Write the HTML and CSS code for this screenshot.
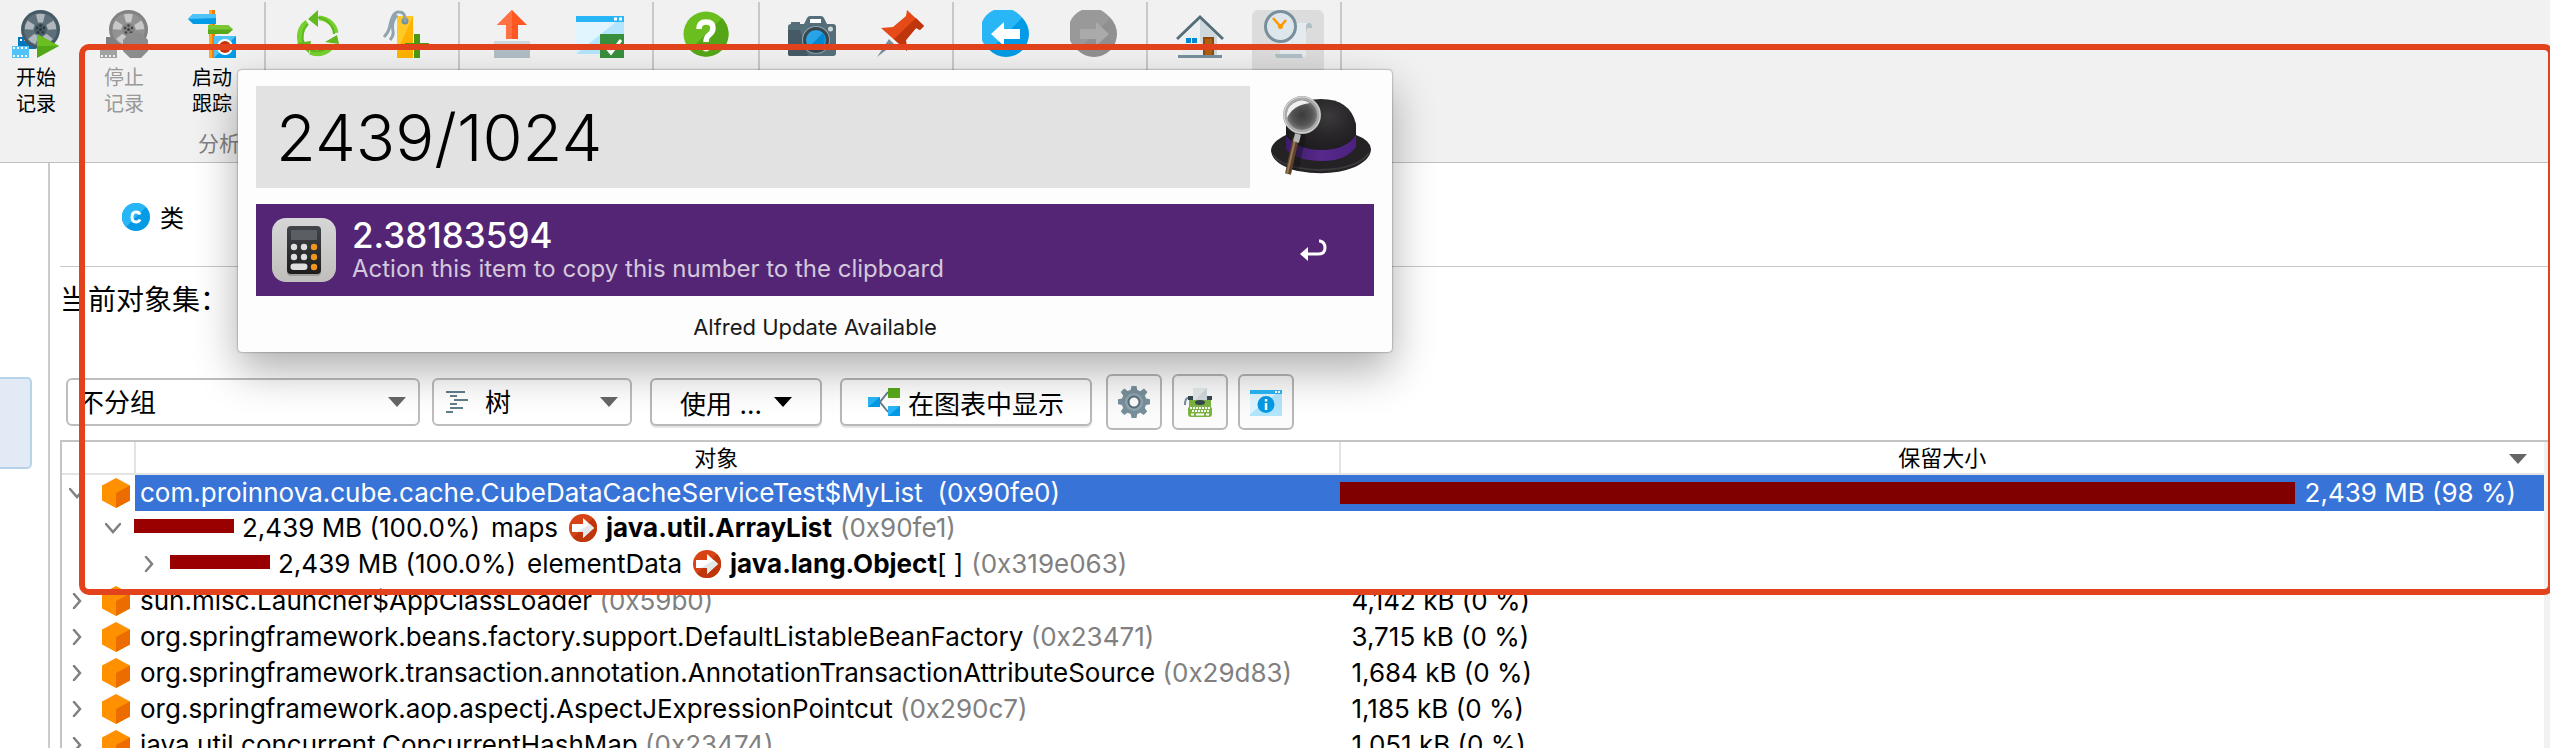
FILE: index.html
```html
<!DOCTYPE html>
<html lang="zh-CN">
<head>
<meta charset="utf-8">
<title>Heap Walker</title>
<link rel="stylesheet" href="styles.css">
</head>
<body>
<svg class="defs" aria-hidden="true">
  <defs>
    <symbol id="cube" viewBox="0 0 28 30"><path fill="#ff9000" d="M14 0 28 7.500V22.500L14 30 0 22.500V7.500z"/><path fill="#ec6c00" d="M14 15 28 7.500V22.500L14 30z"/></symbol>
    <symbol id="right" viewBox="0 0 16 16"><path d="M5 1 11 8 5 15" fill="none" stroke="#808080" stroke-width="2.500" stroke-linecap="round"/></symbol>
    <symbol id="down" viewBox="0 0 16 16"><path d="M1 4 8 12 15 4" fill="none" stroke="#808080" stroke-width="2.500" stroke-linecap="round"/></symbol>
    <symbol id="ref" viewBox="0 0 28 28"><circle cx="14" cy="14" r="14" fill="#d84315"/><path d="M24 4A14 14 0 0 1 4 24z" fill="#bf360c"/><path d="M3 10H14V4L25 14 14 24V18H3z" fill="#fff"/><path d="M14 24V18H8L21 10 25 14z" fill="#e4e8ea"/></symbol>
    <symbol id="caret" viewBox="0 0 18 10"><path d="M0 0H18L9 10z" fill="currentColor"/></symbol>
    <symbol id="reel" viewBox="0 0 48 48"><circle cx="28.500" cy="19.500" r="19.500" fill="currentColor"/><circle cx="28.500" cy="19.500" r="16.500" fill="#fff" opacity=".13"/><g fill="#fff" opacity=".5"><path id="hole" d="M24 4.500Q28.500 3 33 4.500L31 12.500H26z"/><use href="#hole" transform="rotate(72 28.500 19.500)"/><use href="#hole" transform="rotate(144 28.500 19.500)"/><use href="#hole" transform="rotate(216 28.500 19.500)"/><use href="#hole" transform="rotate(288 28.500 19.500)"/></g><circle cx="28.500" cy="19.500" r="6" fill="currentColor"/><g fill="#222" opacity=".65"><circle cx="28.500" cy="19.500" r="1.500"/><circle cx="25" cy="18" r="1.200"/><circle cx="32" cy="18" r="1.200"/><circle cx="26" cy="22.500" r="1.200"/><circle cx="31" cy="22.500" r="1.200"/><circle cx="28.500" cy="15.500" r="1.200"/></g></symbol>
  </defs>
</svg>

<header class="toolbar">
  <div class="group">
    <button class="tool"><svg class="ic" viewBox="0 0 48 48"><path d="M6 27h9q4 9 9 10v2H6z" fill="#0277bd"/><path d="M8 29h2v2H8zm4 0h2v2h-2z" fill="#fff"/><use href="#reel" color="#455a64" width="48" height="48"/><path d="M0 36h17v12H0z" fill="#4fc3f7"/><path d="M1 38h15M1 46h15" stroke="#fff" stroke-width="2" stroke-dasharray="2 2"/><path d="M25 24 47 36 25 48z" fill="#52a817"/><path d="M25 24 47 36H25z" fill="#6bbd20"/></svg><span>开始<br>记录</span></button>
    <button class="tool" disabled><svg class="ic" viewBox="0 0 48 48"><path d="M6 27h9q4 9 9 10v2H6z" fill="#808080"/><use href="#reel" color="#828282" width="48" height="48"/><path d="M0 36h17v12H0z" fill="#a2a2a2"/><path d="M1 38h15M1 46h15" stroke="#f0f0f0" stroke-width="2" stroke-dasharray="2 2"/><path d="M30 23h11l7 7v11l-7 7H30l-7-7V30z" fill="#8c8c8c"/></svg><span>停止<br>记录</span></button>
    <button class="tool"><svg class="ic" viewBox="0 0 48 48"><path d="M21 0h6v48h-6z" fill="#f57c00"/><path d="M21 0h3v48h-3z" fill="#ffa726"/><path d="M0 9 5 4H28V14H5z" fill="#039be5"/><path d="M0 9 5 4H28V8z" fill="#4fc3f7"/><path d="M20 15H40L45 19.500 40 24H20z" fill="#58a81a"/><path d="M20 15H40L45 19.500H20z" fill="#7cc832"/><path d="M26 26h22v22H26z" fill="#039be5"/><path d="M26 26h22L26 48z" fill="#4fc3f7"/><circle cx="37" cy="37" r="8" fill="#fff"/><circle cx="37" cy="37" r="6" fill="#bf360c"/></svg><span>启动<br>跟踪</span></button>
  </div>
  <div class="group">
    <button class="tool" aria-label="GC"><svg class="ic" viewBox="0 0 48 48"><g fill="none" stroke="#76d02e" stroke-width="5"><path d="M25 8A18 18 0 0 1 42 23"/><path d="M13 12A18 18 0 0 0 8 36"/><path d="M16 42A18 18 0 0 0 39 35"/></g><path d="M24 7.500A18 18 0 0 1 40 24M14 14A18 18 0 0 0 10 34M16 40A18 18 0 0 0 37 34" stroke="#5cb81c" stroke-width="2" fill="none"/><path d="M14 9 24 0V17zM45 34 31 32 43 25zM3 33 17 31 15 43z" fill="#62b91f"/></svg></button>
    <button class="tool" aria-label="Bookmark"><svg class="ic" viewBox="0 0 48 48"><path d="M15 6h16v42H15z" fill="#ffb300"/><path d="M15 6h16L15 42z" fill="#ffca28"/><circle cx="23" cy="11" r="3.500" fill="#78909c"/><path d="M23 12Q24 2 17 2 11 1 8 15 7 22 2 27M15 5Q9 12 11 21 12 25 8 30" fill="none" stroke="#90a4ae" stroke-width="3"/><path d="M32 24h6v9h9v6h-9v9h-6v-9h-9v-6h9z" fill="#4c9a12"/></svg></button>
  </div>
  <div class="group">
    <button class="tool" aria-label="Export"><svg class="ic" viewBox="0 0 48 48"><path d="M24 0 39 15H30V29H18V15H9z" fill="#ff5722"/><path d="M24 0V29H18V15H9z" fill="#ff7043"/><path d="M6 31h36v17H6z" fill="#b0bec5"/><path d="M6 31h36v4H6z" fill="#cfd8dc"/></svg></button>
    <button class="tool" aria-label="Settings"><svg class="ic" viewBox="0 0 48 48"><path d="M0 6h48v38H0z" fill="#b3e5fc"/><path d="M0 12h40L0 44z" fill="#e1f5fe"/><path d="M0 6h48v6H0z" fill="#29b6f6"/><path d="M38 7.500h3v3h-3zm5 0h3v3h-3z" fill="#fff"/><path d="M24 24h24v24H24z" fill="#388e3c"/><path d="m30 37 5 6L45 30" fill="none" stroke="#fff" stroke-width="3"/></svg></button>
  </div>
  <div class="group">
    <button class="tool" aria-label="Help"><svg class="ic" viewBox="0 0 48 48"><circle cx="24" cy="24" r="22.500" fill="#6abf1f"/><path d="M40 8A22.500 22.500 0 0 1 8 40z" fill="#54a618"/><path d="M17 19Q17 12 24 12 31 12 31 18 31 22 27 25 24 27 24 32" fill="none" stroke="#fff" stroke-width="5.500"/><circle cx="24" cy="38" r="3.500" fill="#fff"/></svg></button>
  </div>
  <div class="group">
    <button class="tool" aria-label="Snapshot"><svg class="ic" viewBox="0 0 48 48"><path d="M3 12h9v4H3zM19 8q1-2 3-2h11q2 0 3 2l3 6H16z" fill="#546e7a"/><path d="M22 9h11v4H22z" fill="#fff"/><rect y="14" width="48" height="32" rx="3" fill="#546e7a"/><path d="M0 20h12L20 46H2q-2 0-2-2z" fill="#455a64"/><circle cx="28" cy="30" r="14" fill="#90a4ae"/><circle cx="28" cy="30" r="13" fill="#37474f"/><circle cx="28" cy="30" r="10" fill="#29a3e8"/><path d="M35 23A10 10 0 0 1 21 37z" fill="#0288d1"/><circle cx="42.500" cy="19" r="2.500" fill="#cfd8dc"/></svg></button>
    <button class="tool" aria-label="Pin"><svg class="ic" viewBox="0 0 48 48"><path d="M1 47 13 29l5 5z" fill="#78909c"/><path d="M31 0 48 16 44 20 40 18 30 30 31 41 5 18 17 17 30 6z" fill="#e64a19"/><path d="M40 8 48 16 44 20 40 18 30 30 31 41 18 29z" fill="#bf360c"/></svg></button>
  </div>
  <div class="group">
    <button class="tool" aria-label="Back"><svg class="ic" viewBox="0 0 48 48"><circle cx="24" cy="24" r="23" fill="#039be5"/><path d="M40 8A23 23 0 1 0 8 40z" fill="#29b6f6"/><path d="M9 24 22 12V19H38V29H22V36z" fill="#fff"/></svg></button>
    <button class="tool" aria-label="Forward" disabled><svg class="ic" viewBox="0 0 48 48"><circle cx="24" cy="24" r="23" fill="#909090"/><path d="M40 8A23 23 0 1 0 8 40z" fill="#999"/><path d="M39 24 26 12V19H10V29H26V36z" fill="#aaa"/></svg></button>
  </div>
  <div class="group">
    <button class="tool" aria-label="Home"><svg class="ic" viewBox="0 0 48 48"><path d="M7 26 24 9 41 26V45H7z" fill="#eceff1"/><path d="M24 9 41 26V45H30L24 30z" fill="#cfd8dc"/><path d="M1 29 24 7 47 29" fill="none" stroke="#546e7a" stroke-width="3"/><path d="M2 45h44v3H2z" fill="#78909c"/><path d="M10 28h5v5h-5zm6 0h5v5h-5z" fill="#0288d1"/><path d="M27 27h11v18H27z" fill="#8d4a0b"/><path d="M29 29h7v16h-7z" fill="#ad6112"/></svg></button>
    <button class="tool active" aria-label="Time"><svg class="ic" viewBox="0 0 48 48"><path d="M18 13H46L42 18V44q0 4-4 4H16V20z" fill="#e4eaed"/><path d="M42 22V17q0-4 3-4t3 4v1h-5zM11 44h27q0 4 2 4H14q-3 0-3-4z" fill="#b0bec5"/><circle cx="16.500" cy="16.500" r="15" fill="#dde6ea" stroke="#78909c" stroke-width="3"/><path d="M9 8 16.500 16.500 22 10" fill="none" stroke="#ff9800" stroke-width="2.500"/><circle cx="16.500" cy="16.500" r="2.500" fill="#ff9800"/></svg></button>
  </div>
  <div class="group"></div>
  <div class="group-label">分析</div>
</header>

<div class="workspace">
  <aside class="side"><div class="side-item"></div></aside>
  <main class="main">
    <div class="tab"><svg class="class-ic" viewBox="0 0 28 28"><circle cx="14" cy="14" r="14" fill="#039be5"/><path d="M24 4A14 14 0 1 0 4 24z" fill="#29b6f6"/><path d="M18 11.500Q17 9 14 9 10 9 10 14 10 19 14 19 17 19 18 16.500" fill="none" stroke="#fff" stroke-width="3"/></svg><span>类</span></div>
    <div class="set-label">当前对象集：</div>
    <div class="filters">
      <div class="combo grouping"><select aria-label="分组"><option>不分组</option></select><svg class="caret"><use href="#caret"/></svg></div>
      <div class="combo view"><svg class="tree-ic" viewBox="0 0 22 22"><path d="M0 1h19M4 5h7M8 9h14M4 13h7M4 17h13M0 21h7" stroke="#607d8b" stroke-width="2"/></svg><select aria-label="视图"><option>树</option></select><svg class="caret"><use href="#caret"/></svg></div>
      <button class="btn use">使用 ...<svg class="caret"><use href="#caret"/></svg></button>
      <button class="btn graph"><svg class="graph-ic" viewBox="0 0 32 28"><path d="M20 4 12 14 20 24" fill="none" stroke="#607d8b" stroke-width="2"/><path d="M20 0h12v10H20z" fill="#58ab1a"/><path d="M0 9h12v10H0zM20 18h12v10H20z" fill="#039be5"/><path d="M0 9h12L0 19zM20 18h12L20 28z" fill="#29b6f6"/></svg>在图表中显示</button>
      <div class="icon-btns">
        <button class="sq" aria-label="设置"><svg viewBox="0 0 32 32"><path d="M13.500 0h5l.8 4 3 1.300L26 2.500l3.500 3.500-2.600 3.400 1.200 3 3.900.9v5l-4 .8-1.200 3 2.400 3.500-3.500 3.500-3.400-2.400-3 1.200-.8 4h-5l-.8-4-3-1.200-3.500 2.400-3.500-3.500 2.400-3.500-1.200-3-3.900-.8v-5l4-.9 1.200-3L2.700 6l3.500-3.500L9.700 5l3-1.200z" fill="#78909c"/><circle cx="16" cy="16" r="9" fill="#90a4ae"/><circle cx="16" cy="16" r="5.500" fill="#fafafa" stroke="#546e7a" stroke-width="2"/></svg></button>
        <button class="sq" aria-label="报告"><svg viewBox="0 0 32 32"><path d="M9 2h14v13H9z" fill="#e4e9eb"/><path d="M23 2v13H10z" fill="#cfd8dc"/><path d="M1 19Q1 12 4 12" fill="none" stroke="#78909c" stroke-width="2"/><path d="M4 10h5v4H4zM23 10h5v4h-5z" fill="#37474f"/><path d="M5 14h22v7l1 1v6q0 3-3 3H7q-3 0-3-3v-6l1-1z" fill="#7cb342"/><ellipse cx="16" cy="16.500" rx="5" ry="2.500" fill="#37474f"/><path d="M6 22h20M8 25h17" stroke="#fff" stroke-width="2" stroke-dasharray="2 1"/><path d="M7 28.500h3m2 0h8m2 0h3" stroke="#fff" stroke-width="2"/></svg></button>
        <button class="sq" aria-label="信息"><svg viewBox="0 0 32 32"><path d="M0 4h32v26H0z" fill="#b3e5fc"/><path d="M0 8h26L0 28z" fill="#e1f5fe"/><path d="M0 4h32v4H0z" fill="#29b6f6"/><path d="M25 5h2v2h-2zm3 0h2v2h-2z" fill="#fff"/><circle cx="16" cy="18.500" r="8.500" fill="#039be5"/><path d="M14.800 17h2.500v7h-2.500zm0-4h2.500v2.500h-2.500z" fill="#fff"/></svg></button>
      </div>
    </div>

    <div class="table-wrap">
      <table class="objects">
        <colgroup><col class="c-icon"><col><col></colgroup>
        <thead><tr><th></th><th class="name-h">对象</th><th class="size-h">保留大小<svg class="caret sort"><use href="#caret"/></svg></th></tr></thead>
        <tbody>
          <tr><td><div class="lead"><svg class="chev"><use href="#down"/></svg><svg class="cube"><use href="#cube"/></svg></div></td><td class="sel name">com.proinnova.cube.cache.CubeDataCacheServiceTest$MyList&nbsp; (0x90fe0)</td><td class="sel"><div class="meter"><div class="fill"></div><span>2,439 MB (98 %)</span></div></td></tr>
          <tr><td colspan="3"><div class="child lv1"><svg class="chev"><use href="#down"/></svg><i class="bar"></i><span class="pct">2,439 MB (100.0%)</span><span>maps</span><svg class="ref"><use href="#ref"/></svg><b>java.util.ArrayList</b><span class="id">(0x90fe1)</span></div></td></tr>
          <tr><td colspan="3"><div class="child lv2"><svg class="chev"><use href="#right"/></svg><i class="bar"></i><span class="pct">2,439 MB (100.0%)</span><span>elementData</span><svg class="ref"><use href="#ref"/></svg><span><b>java.lang.Object</b>[ ]</span><span class="id">(0x319e063)</span></div></td></tr>
          <tr><td><div class="lead"><svg class="chev"><use href="#right"/></svg><svg class="cube"><use href="#cube"/></svg></div></td><td class="name">sun.misc.Launcher$AppClassLoader <span class="id">(0x59b0)</span></td><td class="size">4,142 kB (0 %)</td></tr>
          <tr><td><div class="lead"><svg class="chev"><use href="#right"/></svg><svg class="cube"><use href="#cube"/></svg></div></td><td class="name">org.springframework.beans.factory.support.DefaultListableBeanFactory <span class="id">(0x23471)</span></td><td class="size">3,715 kB (0 %)</td></tr>
          <tr><td><div class="lead"><svg class="chev"><use href="#right"/></svg><svg class="cube"><use href="#cube"/></svg></div></td><td class="name">org.springframework.transaction.annotation.AnnotationTransactionAttributeSource <span class="id">(0x29d83)</span></td><td class="size">1,684 kB (0 %)</td></tr>
          <tr><td><div class="lead"><svg class="chev"><use href="#right"/></svg><svg class="cube"><use href="#cube"/></svg></div></td><td class="name">org.springframework.aop.aspectj.AspectJExpressionPointcut <span class="id">(0x290c7)</span></td><td class="size">1,185 kB (0 %)</td></tr>
          <tr><td><div class="lead"><svg class="chev"><use href="#right"/></svg><svg class="cube"><use href="#cube"/></svg></div></td><td class="name">java.util.concurrent.ConcurrentHashMap <span class="id">(0x23474)</span></td><td class="size">1,051 kB (0 %)</td></tr>
        </tbody>
      </table>
    </div>
  </main>
</div>

<div class="highlight"></div>

<section class="launcher">
  <div class="query-row">
    <input class="query" aria-label="Search" value="2439/1024">
    <svg class="hat" viewBox="0 0 104 82">
      <defs>
        <radialGradient id="dome" cx=".6" cy=".3" r=".7"><stop offset="0" stop-color="#3c3a3c"/><stop offset=".5" stop-color="#272527"/><stop offset="1" stop-color="#1b191b"/></radialGradient>
        <radialGradient id="lens"><stop offset="0" stop-color="#3a3a3a"/><stop offset=".6" stop-color="#555"/><stop offset="1" stop-color="#888"/></radialGradient>
        <linearGradient id="band"><stop offset="0" stop-color="#3c1c68"/><stop offset=".5" stop-color="#57298c"/><stop offset="1" stop-color="#4a2180"/></linearGradient>
      </defs>
      <path d="M16 39Q1 46 1 55 3 69 28 75 60 81 85 71 101 63 101 53 100 44 86 39z" fill="#242224"/>
      <path d="M3 59Q14 73 50 74 88 73 99 57" fill="none" stroke="#3b393b" stroke-width="2"/>
      <path d="M16 53V28Q22 3 51 3 80 3 86 28V51Q76 61 52 61 28 61 16 53z" fill="url(#dome)"/>
      <path d="M16 40Q28 54 52 54 76 54 86 39V51Q76 65 52 65 28 65 16 54z" fill="url(#band)"/>
      <path d="M32 38 24 74" stroke="#111" stroke-width="9" opacity=".4"/>
      <path d="M26 42 18 78" stroke="#5d432f" stroke-width="6"/><path d="M25 44 17 78" stroke="#9b7854" stroke-width="2"/>
      <path d="M28 38 26 46" stroke="#b5b5b5" stroke-width="6"/>
      <circle cx="32" cy="19" r="17" fill="url(#lens)" stroke="#a9a9a9" stroke-width="4"/><path d="M17 22A15 15 0 0 1 40 7Q23 9 17 22z" fill="#f0f0f0"/><circle cx="32" cy="19" r="18" fill="none" stroke="#ddd" stroke-width="1"/>
    </svg>
  </div>
  <button class="result">
    <svg class="calc" viewBox="0 0 64 64"><defs><linearGradient id="cg" x2="0" y2="1"><stop offset="0" stop-color="#d6d6d6"/><stop offset="1" stop-color="#c0bfbd"/></linearGradient><linearGradient id="cb" x2="0" y2="1"><stop offset="0" stop-color="#41454a"/><stop offset="1" stop-color="#1c1c1d"/></linearGradient></defs><rect width="64" height="64" rx="14" fill="url(#cg)"/><rect x="15" y="10" width="34" height="48" rx="4" fill="#777" opacity=".5"/><rect x="15" y="8" width="34" height="48" rx="4" fill="url(#cb)"/><rect x="19" y="12" width="26" height="10" rx="1" fill="#5b5e62"/><g fill="#dedede"><circle cx="22" cy="29" r="3.200"/><circle cx="32" cy="29" r="3.200"/><circle cx="22" cy="39" r="3.200"/><circle cx="32" cy="39" r="3.200"/><rect x="18.500" y="45.500" width="17" height="6.500" rx="3.200"/></g><g fill="#f0961e"><circle cx="42" cy="29" r="3.200"/><circle cx="42" cy="39" r="3.200"/><circle cx="42" cy="49" r="3.200"/></g></svg>
    <span class="result-text"><span class="result-title">2.38183594</span><span class="result-sub">Action this item to copy this number to the clipboard</span></span>
    <svg class="enter" viewBox="0 0 28 22"><path d="M19 2H20Q25 3 25 9 25 15 18 15H7" fill="none" stroke="#fff" stroke-width="3"/><path d="M0 15 8 8V22z" fill="#fff"/></svg>
  </button>
  <div class="update">Alfred Update Available</div>
</section>
</body>
</html>
```

FILE: styles.css
```css
* { box-sizing: border-box; }
body {
  margin: 0;
  height: 100vh;
  overflow: hidden;
  position: relative;
  display: flex;
  flex-direction: column;
  background: #fff;
  color: #000;
  font-family: Inter, "Noto Sans CJK SC", sans-serif;
  font-size: 24px;
}
button, select, input { font: inherit; color: inherit; margin: 0; padding: 0; border: 0; background: none; }
svg { display: block; flex: none; }
.defs { position: absolute; width: 0; height: 0; }

/* toolbar */
.toolbar {
  flex: none;
  display: flex;
  flex-wrap: wrap;
  background: #f1f1f1;
  border-bottom: 1px solid #c0c0c0;
  padding-top: 2px;
}
.group { display: flex; gap: 16px; height: 124px; padding: 8px 16px 0; border-left: 2px solid #c8c8c8; }
.group:first-child { padding-left: 0; border-left: 0; }
.tool {
  width: 72px;
  display: flex;
  flex-direction: column;
  align-items: center;
  gap: 7px;
  font-size: 20px;
  line-height: 26px;
}
.tool:disabled { color: #999; }
.tool.active { background: #dcdcdc; border-radius: 6px; }
.ic { width: 48px; height: 48px; }
.group-label { flex: 0 0 100%; padding-left: 198px; height: 36px; line-height: 36px; font-size: 21px; color: #808080; }

/* panes */
.workspace { flex: 1; min-height: 0; display: flex; }
.side { flex: none; width: 50px; padding-top: 214px; border-right: 2px solid #ccc; }
.side-item { width: 32px; height: 92px; background: #e2ebf5; border: 2px solid #b7d3ea; border-left: 0; border-radius: 0 5px 5px 0; }
.main { flex: 1; min-width: 0; display: flex; flex-direction: column; padding-left: 10px; }
.tab { flex: none; display: flex; align-items: center; gap: 10px; height: 104px; padding: 4px 0 0 62px; border-bottom: 1px solid #c8c8c8; }
.class-ic { width: 28px; height: 28px; }
.set-label { flex: none; height: 105px; padding-top: 13px; line-height: 40px; font-size: 28px; }

.filters { flex: none; display: flex; align-items: center; height: 60px; padding-left: 6px; font-size: 26px; }
.combo { display: flex; align-items: center; height: 48px; border: 2px solid #bdbdbd; border-radius: 6px; background: #fff; }
.combo select { flex: 1; min-width: 0; height: 44px; appearance: none; outline: 0; }
.caret { width: 18px; height: 10px; }
.combo .caret, .sort { color: #666; }
.grouping { width: 354px; padding: 0 12px 0 10px; margin-right: 12px; }
.view { width: 200px; padding: 0 12px; margin-right: 18px; }
.tree-ic { width: 22px; height: 22px; margin-right: 17px; }
.btn { display: flex; align-items: center; justify-content: center; height: 48px; border: 2px solid #b8b8b8; border-radius: 6px; background: #fff; box-shadow: 0 2px 1px #e4e4e4; }
.use { width: 172px; gap: 12px; margin-right: 18px; }
.graph { width: 252px; gap: 8px; margin-right: 14px; }
.graph-ic { width: 32px; height: 28px; }
.icon-btns { display: flex; gap: 10px; }
.sq { width: 56px; height: 56px; display: grid; place-items: center; border: 2px solid #b8b8b8; border-radius: 6px; background: #fbfbfb; }
.sq svg { width: 32px; height: 32px; }

/* object table */
.table-wrap { flex: 1; min-height: 0; margin-top: 8px; overflow: hidden; border: solid #c4c4c4; border-width: 2px 0 0 2px; padding-right: 6px; background: linear-gradient(#f1f1f1, #f1f1f1) right / 6px 100% no-repeat; }
.objects { width: 100%; table-layout: fixed; border-collapse: collapse; background: #fff; }
.c-icon { width: 73px; }
th { position: relative; height: 32px; padding: 0; border-bottom: 2px solid #e4e4e4; font-size: 22px; font-weight: 400; line-height: 26px; text-align: center; }
th + th { border-left: 2px solid #e4e4e4; }
.name-h { padding-right: 42px; }
.sort { position: absolute; right: 17px; top: 12px; }
td { height: 36px; padding: 0; font-size: 26px; line-height: 36px; white-space: nowrap; overflow: hidden; }
.lead { display: flex; align-items: center; height: 36px; gap: 17px; padding-left: 7px; }
.chev { width: 16px; height: 16px; }
.cube { width: 28px; height: 30px; }
.name { padding-left: 5px; }
.size { padding-left: 12px; }
.sel { background: #3874d8; color: #fff; }
.id { color: #808080; }
.meter { display: flex; align-items: center; height: 36px; gap: 10px; padding-right: 28px; }
.fill { flex: 1; height: 22px; background: #800000; }
.child { display: flex; align-items: center; height: 36px; padding-bottom: 2px; }
.lv1 { padding-left: 43px; }
.lv2 { padding-left: 79px; }
.child .bar { width: 100px; height: 14px; margin: 0 8px 4px 13px; background: #990000; }
.pct { width: 249px; }
.ref { width: 28px; height: 28px; margin: 0 9px 0 11px; }
.child .id { margin-left: 8px; }

/* frame drawn over the window */
.highlight { position: absolute; top: 44px; right: -4px; left: 79px; height: 551px; border: 6px solid #e2431c; border-radius: 10px; pointer-events: none; }

/* launcher popup */
.launcher {
  position: absolute;
  top: 70px;
  left: 238px;
  width: 1154px;
  padding: 16px 18px 0;
  background: #fdfdfd;
  border-radius: 4px;
  box-shadow: 0 0 2px rgba(0, 0, 0, .6), 0 18px 44px rgba(0, 0, 0, .32);
}
.query-row { display: flex; align-items: center; gap: 20px; }
.query { flex: 1; min-width: 0; height: 102px; padding-left: 20px; background: #e2e2e2; outline: 0; font-family: Inter, sans-serif; font-size: 65px; font-weight: 300; }
.hat { width: 104px; height: 82px; }
.result { display: flex; align-items: center; width: 100%; height: 92px; margin-top: 16px; padding: 0 46px 0 16px; background: #532574; color: #fff; text-align: left; }
.calc { width: 64px; height: 64px; margin-right: 16px; }
.result-text { flex: 1; display: flex; flex-direction: column; }
.result-title { font-size: 35px; line-height: 38px; font-weight: 500; }
.result-sub { font-size: 24px; line-height: 30px; color: #d4c8dc; }
.enter { width: 28px; height: 22px; }
.update { height: 48px; margin-top: 8px; line-height: 46px; font-size: 22px; text-align: center; color: #1a1a1a; }
```
